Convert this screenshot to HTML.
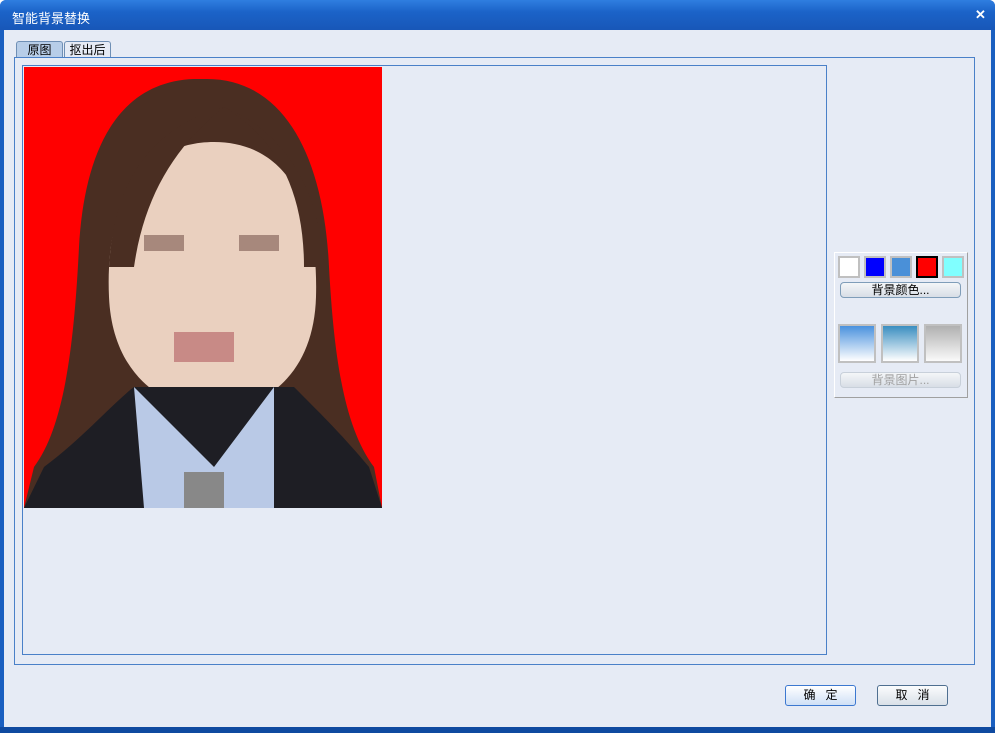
<!DOCTYPE html>
<html><head><meta charset="utf-8"><style>
body{margin:0;width:995px;height:733px;overflow:hidden;font-family:"Liberation Sans","Noto Sans CJK SC",sans-serif;font-size:12px;}
.win{position:absolute;left:0;top:0;width:995px;height:733px;background:#1a5fc0;border-radius:6px 6px 0 0;}
.title{position:absolute;left:0;top:0;width:995px;height:30px;background:linear-gradient(#2f7ee0,#1b63c8 40%,#1857b8);border-radius:6px 6px 0 0;color:#fff;}
.tt{position:absolute;left:12px;top:8px;font-size:13px;}
.title .x{position:absolute;left:975px;top:7px;font-weight:bold;font-size:13px;}
.client{position:absolute;left:4px;top:30px;width:987px;height:697px;background:#e6ebf5;}
.tab{position:absolute;top:41px;height:16px;border:1px solid #6f8fb5;border-bottom:none;border-radius:3px 3px 0 0;font-size:12px;text-align:center;line-height:16px;color:#000;}
.panel{position:absolute;left:14px;top:57px;width:959px;height:606px;border:1px solid #4a80c8;background:#e6ebf5;}
.img{position:absolute;left:22px;top:65px;width:803px;height:588px;border:1px solid #4a80c8;}
.rp{position:absolute;left:834px;top:252px;width:132px;height:144px;border:1px solid #fff;border-right-color:#a0a0a0;border-bottom-color:#a0a0a0;}
.sw{position:absolute;top:256px;width:18px;height:18px;border:2px solid #c0c0c0;}
.bt{position:absolute;height:14px;border:1px solid #7f9db9;border-radius:4px;background:linear-gradient(#f4f6f8,#d8dee6);text-align:center;font-size:12px;line-height:14px;}
.g{position:absolute;top:324px;width:34px;height:35px;border:2px solid #c0c0c0;}
.btn{position:absolute;top:685px;height:19px;border:1px solid #4f6f90;border-radius:3px;text-align:center;line-height:19px;font-size:12px;}
</style></head><body>
<div class="win">
<div class="title"><span class="tt">智能背景替换</span><span class="x">✕</span></div>
<div class="client"></div>
<div style="position:absolute;left:0;top:727px;width:995px;height:6px;background:#0f4aa0"></div>
<div class="tab" style="left:16px;width:45px;background:#b7cde8;">原图</div>
<div class="tab" style="left:64px;width:45px;background:#e6ebf5;">抠出后</div>
<div class="panel"></div>
<div class="img"></div>
<svg style="position:absolute;left:24px;top:67px" width="358" height="441" viewBox="0 0 358 441">
<rect width="358" height="441" fill="#ff0000"/>
<path d="M170 12 C90 15 60 90 55 180 C50 280 40 360 10 400 L0 441 L358 441 L350 400 C320 360 310 290 305 200 C300 90 260 10 180 12 Z" fill="#4a2e22"/>
<path d="M85 230 C80 120 130 75 190 75 C250 75 295 120 292 230 C290 300 250 340 190 345 C130 340 88 300 85 230 Z" fill="#ead0bf"/>
<path d="M85 200 C90 110 130 60 200 40 C150 80 120 130 110 200 Z" fill="#4a2e22"/>
<path d="M280 200 C280 120 250 70 200 40 C250 60 295 110 300 200 Z" fill="#4a2e22"/>
<rect x="130" y="310" width="120" height="90" fill="#ead0bf"/>
<rect x="120" y="168" width="40" height="16" fill="#8a6a60" opacity=".7"/>
<rect x="215" y="168" width="40" height="16" fill="#8a6a60" opacity=".7"/>
<rect x="150" y="265" width="60" height="30" fill="#c88a86"/>
<path d="M0 441 L20 400 C60 370 90 335 110 320 L270 320 C300 350 320 370 345 400 L358 441 Z" fill="#1e1e24"/>
<path d="M110 320 L120 441 L250 441 L250 320 L190 400 Z" fill="#b9c9e6"/>
<rect x="160" y="405" width="40" height="36" fill="#888"/>
</svg>
<div class="rp"></div>
<div class="sw" style="left:838px;background:#fff"></div>
<div class="sw" style="left:864px;background:#0000ff"></div>
<div class="sw" style="left:890px;background:#4a90d8"></div>
<div class="sw" style="left:916px;background:#ff0000;border-color:#000"></div>
<div class="sw" style="left:942px;background:#80ffff"></div>
<div class="bt" style="left:840px;top:282px;width:119px;">背景颜色...</div>
<div class="g" style="left:838px;background:linear-gradient(#4a92de,#fff)"></div>
<div class="g" style="left:881px;background:linear-gradient(#3a8ec0,#fff)"></div>
<div class="g" style="left:924px;background:linear-gradient(#b0b0b0,#fafafa)"></div>
<div class="bt" style="left:840px;top:372px;width:119px;color:#a0a0a0;border-color:#c8d0da;">背景图片...</div>
<div class="btn" style="left:785px;width:69px;background:linear-gradient(#fff,#cfe0f6);border-color:#3c78d0;">确&nbsp;&nbsp;&nbsp;定</div>
<div class="btn" style="left:877px;width:69px;background:linear-gradient(#fbfcfd,#d9e0e8);">取&nbsp;&nbsp;&nbsp;消</div>
</div>
</body></html>
